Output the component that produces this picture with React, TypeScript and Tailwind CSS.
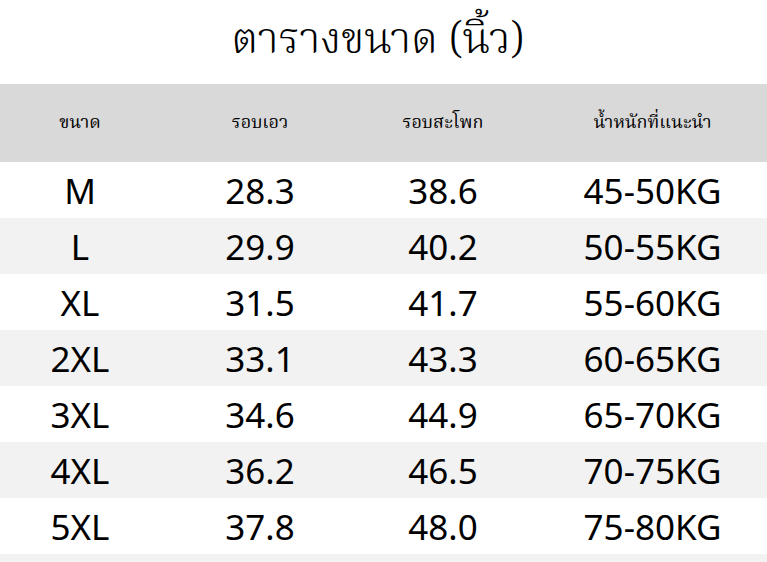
import React from 'react';

const rows = [
  ['M', '28.3', '38.6', '45-50KG'],
  ['L', '29.9', '40.2', '50-55KG'],
  ['XL', '31.5', '41.7', '55-60KG'],
  ['2XL', '33.1', '43.3', '60-65KG'],
  ['3XL', '34.6', '44.9', '65-70KG'],
  ['4XL', '36.2', '46.5', '70-75KG'],
  ['5XL', '37.8', '48.0', '75-80KG'],
];

const headers = ['ขนาด', 'รอบเอว', 'รอบสะโพก', 'น้ำหนักที่แนะนำ'];

const thai =
  "font-['Kinnari','Laksaman','Norasi','Noto_Serif_Thai','Tlwg_Typo','Loma','Noto_Sans_Thai','DejaVu_Serif',serif]";

export default function App() {
  return (
    <div className="w-[767px] h-[562px] overflow-hidden bg-white text-black">
      <div className={`h-[84px] flex items-center justify-center pr-3 text-[43px] font-light ${thai}`}>
        ตารางขนาด (นิ้ว)
      </div>

      <div className={`grid grid-cols-[160px_200px_166px_1fr] h-[78px] items-center bg-[#d9d9d9] text-[18px] ${thai}`}>
        {headers.map((h, i) => (
          <div key={h} className={`text-center ${i === 3 ? 'pl-3' : ''}`}>
            {h}
          </div>
        ))}
      </div>

      {rows.map((r, idx) => (
        <div
          key={r[0]}
          className={`grid grid-cols-[160px_200px_166px_1fr] h-[56px] items-center text-[35px] font-['Noto_Sans',sans-serif] ${
            idx % 2 === 1 ? 'bg-[#f2f2f2]' : 'bg-white'
          }`}
        >
          {r.map((c, i) => (
            <div key={i} className={`text-center leading-none ${i === 3 ? 'pl-3' : ''}`}>
              {c}
            </div>
          ))}
        </div>
      ))}
      <div className="h-[56px] bg-[#f2f2f2]" />
    </div>
  );
}
